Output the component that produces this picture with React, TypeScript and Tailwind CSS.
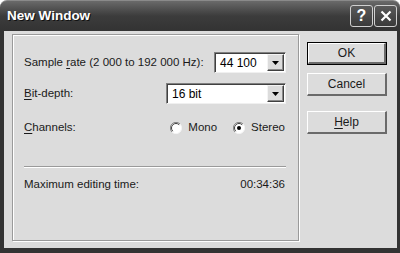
import React from 'react';

function Combo({ value, width }: { value: string; width: string }) {
  return (
    <div
      className={`${width} h-[21px] bg-white flex items-stretch border border-t-[#808080] border-l-[#808080] border-r-[#f0f0f0] border-b-[#f0f0f0] shadow-[inset_1px_1px_0_#404040]`}
    >
      <div className="flex-1 flex items-center pl-[5px] pt-[1px] text-[12px] text-black">{value}</div>
      <div className="w-[17px] m-[1px] ml-0 bg-[#dcdcdc] flex items-center justify-center border border-t-[#f4f4f4] border-l-[#f4f4f4] border-r-[#404040] border-b-[#404040] shadow-[inset_-1px_-1px_0_#8a8a8a]">
        <svg width="7" height="4" viewBox="0 0 7 4">
          <path d="M0 0h7L3.5 4z" fill="#000" />
        </svg>
      </div>
    </div>
  );
}

function Radio({ checked, label }: { checked?: boolean; label: string }) {
  return (
    <div className="flex items-center gap-[6px]">
      <svg width="12" height="12" viewBox="0 0 12 12">
        <circle cx="6" cy="6" r="5.5" fill="#fff" />
        <path d="M10 2A5.5 5.5 0 0 0 2 10" stroke="#808080" strokeWidth="1" fill="none" />
        <path d="M9.2 2.8A4.5 4.5 0 0 0 2.8 9.2" stroke="#404040" strokeWidth="1" fill="none" />
        <path d="M2 10A5.5 5.5 0 0 0 10 2" stroke="#f4f4f4" strokeWidth="1" fill="none" />
        {checked && <circle cx="6" cy="6" r="2" fill="#000" />}
      </svg>
      <span>{label}</span>
    </div>
  );
}

function Button({ label, isDefault, underline }: { label: string; isDefault?: boolean; underline?: number }) {
  const text =
    underline === undefined ? (
      label
    ) : (
      <>
        {label.slice(0, underline)}
        <span className="underline underline-offset-2">{label[underline]}</span>
        {label.slice(underline + 1)}
      </>
    );
  return (
    <div className={`w-[80px] h-[23px] ${isDefault ? 'border border-black' : ''}`}>
      <div className="w-full h-full flex items-center justify-center bg-[#dcdcdc] border-t border-l border-t-white border-l-white border-b-2 border-r-2 border-b-[#6a6a6a] border-r-[#6a6a6a] text-[12px]">
        {text}
      </div>
    </div>
  );
}

export default function App() {
  return (
    <div
      className="w-[400px] h-[253px] flex flex-col bg-white overflow-hidden text-[11.5px] text-[#1a1a1a]"
      style={{ fontFamily: '"Liberation Sans", Arial, sans-serif' }}
    >
      {/* Title bar */}
      <div className="h-[31px] rounded-t-[7px] bg-gradient-to-b from-[#6a6a6a] via-[#3c3c3c] to-[#333] flex items-center pl-[7px] pr-[3px] border-t border-[#8a8a8a]">
        <span className="flex-1 text-white font-bold text-[13.5px] pt-[1px] [text-shadow:1px_1px_0_#111]">New Window</span>
        <div className="flex gap-[1px]">
          <div className="w-[23px] h-[22px] rounded-[3px] border border-[#d0d0d0] bg-gradient-to-b from-[#5a5a5a] to-[#3a3a3a] flex items-center justify-center text-white font-bold text-[16px]">
            ?
          </div>
          <div className="w-[23px] h-[22px] rounded-[3px] border border-[#d0d0d0] bg-gradient-to-b from-[#5a5a5a] to-[#3a3a3a] flex items-center justify-center">
            <svg width="12" height="12" viewBox="0 0 12 12">
              <path d="M1.5 1.5l9 9M10.5 1.5l-9 9" stroke="#fff" strokeWidth="2.2" />
            </svg>
          </div>
        </div>
      </div>

      {/* Client area */}
      <div className="flex-1 flex bg-[#dcdcdc] border-l-4 border-r-[3px] border-b-[5px] border-[#333] pl-[8px] pt-[3px]">
        {/* Group panel */}
        <div className="w-[287px] h-[207px] border border-[#9a9a9a] shadow-[inset_1px_1px_0_#fff,1px_1px_0_#fff] pt-[17px] pl-[11px] pr-[12px] flex flex-col">
          <div className="h-[21px] flex items-center justify-between">
            <span>
              Sample <span className="underline underline-offset-2">r</span>ate (2 000 to 192 000 Hz):
            </span>
            <Combo value="44 100" width="w-[72px]" />
          </div>
          <div className="h-[21px] mt-[10px] flex items-center justify-between">
            <span>
              <span className="underline underline-offset-2">B</span>it-depth:
            </span>
            <Combo value="16 bit" width="w-[120px]" />
          </div>
          <div className="h-[20px] mt-[14px] flex items-center justify-between">
            <span>
              <span className="underline underline-offset-2">C</span>hannels:
            </span>
            <div className="flex items-center gap-[16px] pr-[1px]">
              <Radio label="Mono" />
              <Radio label="Stereo" checked />
            </div>
          </div>
          <div className="mt-[28px] h-[2px] border-t border-[#9a9a9a] border-b border-b-white" />
          <div className="mt-[9px] h-[16px] flex items-center justify-between pr-[1px]">
            <span>Maximum editing time:</span>
            <span>00:34:36</span>
          </div>
        </div>

        {/* Buttons */}
        <div className="ml-[8px] pt-[8px] flex flex-col gap-[8px]">
          <Button label="OK" isDefault />
          <Button label="Cancel" />
          <div className="mt-[7px]">
            <Button label="Help" underline={0} />
          </div>
        </div>
      </div>
    </div>
  );
}
